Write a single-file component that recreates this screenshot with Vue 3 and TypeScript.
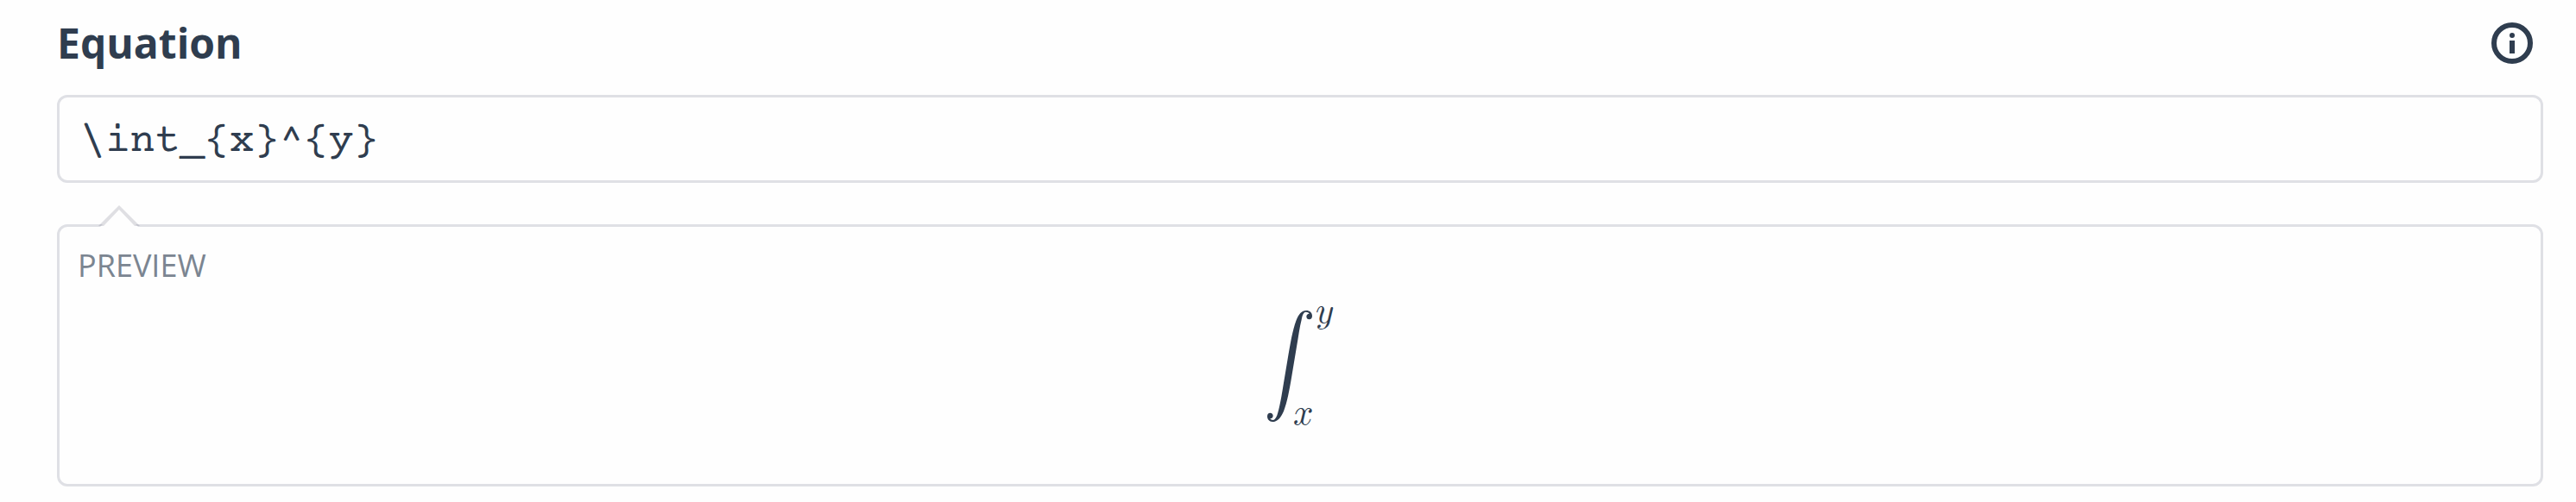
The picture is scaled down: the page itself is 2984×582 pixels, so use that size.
<script setup lang="ts">
import { ref, computed } from 'vue'

const source = ref<string>('\\int_{x}^{y}')

const limits = computed(() => ({
  lower: source.value.match(/_\{([^}]*)\}/)?.[1] ?? '',
  upper: source.value.match(/\^\{([^}]*)\}/)?.[1] ?? '',
}))
</script>

<template>
  <main class="editor">
    <header class="heading">
      <label class="title" for="equation">Equation</label>
      <button class="info" type="button" aria-label="Equation help">
        <svg viewBox="0 0 48 48" width="48" height="48" aria-hidden="true">
          <circle cx="24" cy="24" r="21" fill="none" stroke="currentColor" stroke-width="6" />
          <circle cx="24" cy="15" r="3" fill="currentColor" />
          <rect x="21" y="21" width="6" height="15" fill="currentColor" />
        </svg>
      </button>
    </header>

    <input id="equation" v-model="source" class="source" type="text" spellcheck="false" autocomplete="off" />

    <section class="preview" aria-labelledby="preview-title">
      <svg class="pointer" viewBox="0 0 50 25" width="50" height="25" aria-hidden="true">
        <path class="pointer-fill" d="M3 25 L25 3 L47 25 Z" />
        <path class="pointer-line" d="M1 24 L25 0 L49 24 L43 24 L25 5 L7 24 Z" />
      </svg>
      <h2 id="preview-title" class="caption">PREVIEW</h2>
      <div class="formula">
        <svg viewBox="84 90 156 387" width="52" height="129" role="img" aria-label="Integral">
          <path
            fill="currentColor"
            d="M102 477 C91 476 84 468 84 458 C84 450 88 446 94 446 C100 446 104 450 104 456 C104 462 100 466 94 466 C96 470 99 471 104 471 C112 470 117 460 121 445 C128 421 134 386 139 354 L155 258 C164 205 172 158 184 126 C193 102 204 90 219 90 C232 90 240 98 240 109 C240 117 236 121 230 121 C224 121 220 117 220 111 C220 105 224 101 230 101 C228 97 224 95 218 95 C209 96 206 107 203 122 C196 148 192 182 186 216 L169 318 C161 366 153 411 141 440 C131 464 118 477 102 477 Z"
          />
        </svg>
        <div class="limits">
          <math class="limit upper" display="block"><mi>{{ limits.upper }}</mi></math>
          <math class="limit" display="block"><mi>{{ limits.lower }}</mi></math>
        </div>
      </div>
    </section>
  </main>
</template>

<style>
body {
  margin: 0;
  background: #fefefe;
}
</style>

<style scoped>
.editor {
  box-sizing: border-box;
  padding: 18px 38px 18px 66px;
  color: #2f3d4f;
  font-family: "Open Sans", "Noto Sans", sans-serif;
}

.heading {
  display: flex;
  align-items: center;
  justify-content: space-between;
  height: 64px;
  margin-bottom: 28px;
  padding-right: 12px;
}

.title {
  font-size: 48px;
  line-height: 64px;
  font-weight: 700;
}

.info {
  display: flex;
  padding: 0;
  border: 0;
  background: none;
  color: inherit;
  cursor: pointer;
}

.source {
  display: block;
  box-sizing: border-box;
  width: 100%;
  height: 102px;
  padding: 6px 24px 0;
  border: 3px solid #dfe0e5;
  border-radius: 12px;
  outline: none;
  background: transparent;
  color: inherit;
  font-family: "Courier Prime", "Liberation Mono", monospace;
  font-size: 48px;
}

.preview {
  position: relative;
  box-sizing: border-box;
  min-height: 304px;
  margin-top: 48px;
  padding: 21px;
  border: 3px solid #dfe0e5;
  border-radius: 12px;
}

.pointer {
  position: absolute;
  top: -25px;
  left: 44px;
}

.pointer-fill {
  fill: #fefefe;
}

.pointer-line {
  fill: #2f3048;
  fill-opacity: 0.15;
}

.caption {
  margin: 0;
  color: #7b8591;
  font-size: 36px;
  line-height: 48px;
  font-weight: 400;
}

.formula {
  display: flex;
  justify-content: center;
  align-items: center;
  margin-top: 24px;
}

.limits {
  display: flex;
  flex-direction: column;
  justify-content: space-between;
  align-items: flex-start;
  height: 136px;
  margin-left: -22px;
}

.limit {
  width: auto;
  font-family: "Latin Modern Math", "Liberation Serif", math, serif;
  font-size: 41px;
}

.upper {
  margin-left: 26px;
}
</style>
